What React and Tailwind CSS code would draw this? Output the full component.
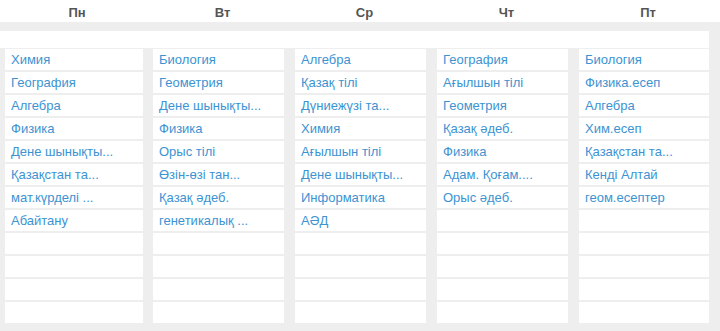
import React from "react";

const days = [
  {
    name: "Пн",
    width: "w-[138px]",
    lessons: ["Химия", "География", "Алгебра", "Физика", "Дене шынықты...", "Қазақстан та...", "мат.күрделі ...", "Абайтану"]
  },
  {
    name: "Вт",
    width: "w-[131px]",
    lessons: ["Биология", "Геометрия", "Дене шынықты...", "Физика", "Орыс тілі", "Өзін-өзі тан...", "Қазақ әдеб.", "генетикалық ..."]
  },
  {
    name: "Ср",
    width: "w-[131px]",
    lessons: ["Алгебра", "Қазақ тілі", "Дүниежүзі та...", "Химия", "Ағылшын тілі", "Дене шынықты...", "Информатика", "АӘД"]
  },
  {
    name: "Чт",
    width: "w-[131px]",
    lessons: ["География", "Ағылшын тілі", "Геометрия", "Қазақ әдеб.", "Физика", "Адам. Қоғам....", "Орыс әдеб."]
  },
  {
    name: "Пт",
    width: "w-[130px]",
    lessons: ["Биология", "Физика.есеп", "Алгебра", "Хим.есеп", "Қазақстан та...", "Кенді Алтай", "геом.есептер"]
  }
];

const ROWS = 12;

const App = () => {
  return (
    <div className="w-[720px] h-[331px] overflow-hidden bg-white font-['Liberation_Sans',Arial,sans-serif]">
      {/* day names */}
      <div className="flex h-[22px] items-center pt-[4px] pl-[8px] gap-[10px]">
        {days.map((day, i) => (
          <div
            key={day.name}
            className={`${day.width} ${i > 0 ? "ml-[1px]" : ""} text-center text-[13px] font-bold text-[#555555]`}
          >
            {day.name}
          </div>
        ))}
      </div>

      <div className="h-[309px] bg-[#eeeeee] pt-[9px]">
        <div className="h-[17px] w-[709px] bg-white" />
        <div className="flex pl-[5px] pt-[1px]">
          {days.map((day, i) => (
            <div
              key={day.name}
              className={`${day.width} ${i === 0 ? "" : i === 1 ? "ml-[10px]" : "ml-[11px]"} flex flex-col gap-[2px]`}
            >
              {Array.from({ length: ROWS }).map((_, r) => (
                <div
                  key={r}
                  className="h-[21px] bg-white pl-[6px] flex items-center text-[13px] text-[#3c93d2] whitespace-nowrap overflow-hidden"
                >
                  {day.lessons[r] || ""}
                </div>
              ))}
            </div>
          ))}
        </div>
      </div>
    </div>
  );
};

export default App;
